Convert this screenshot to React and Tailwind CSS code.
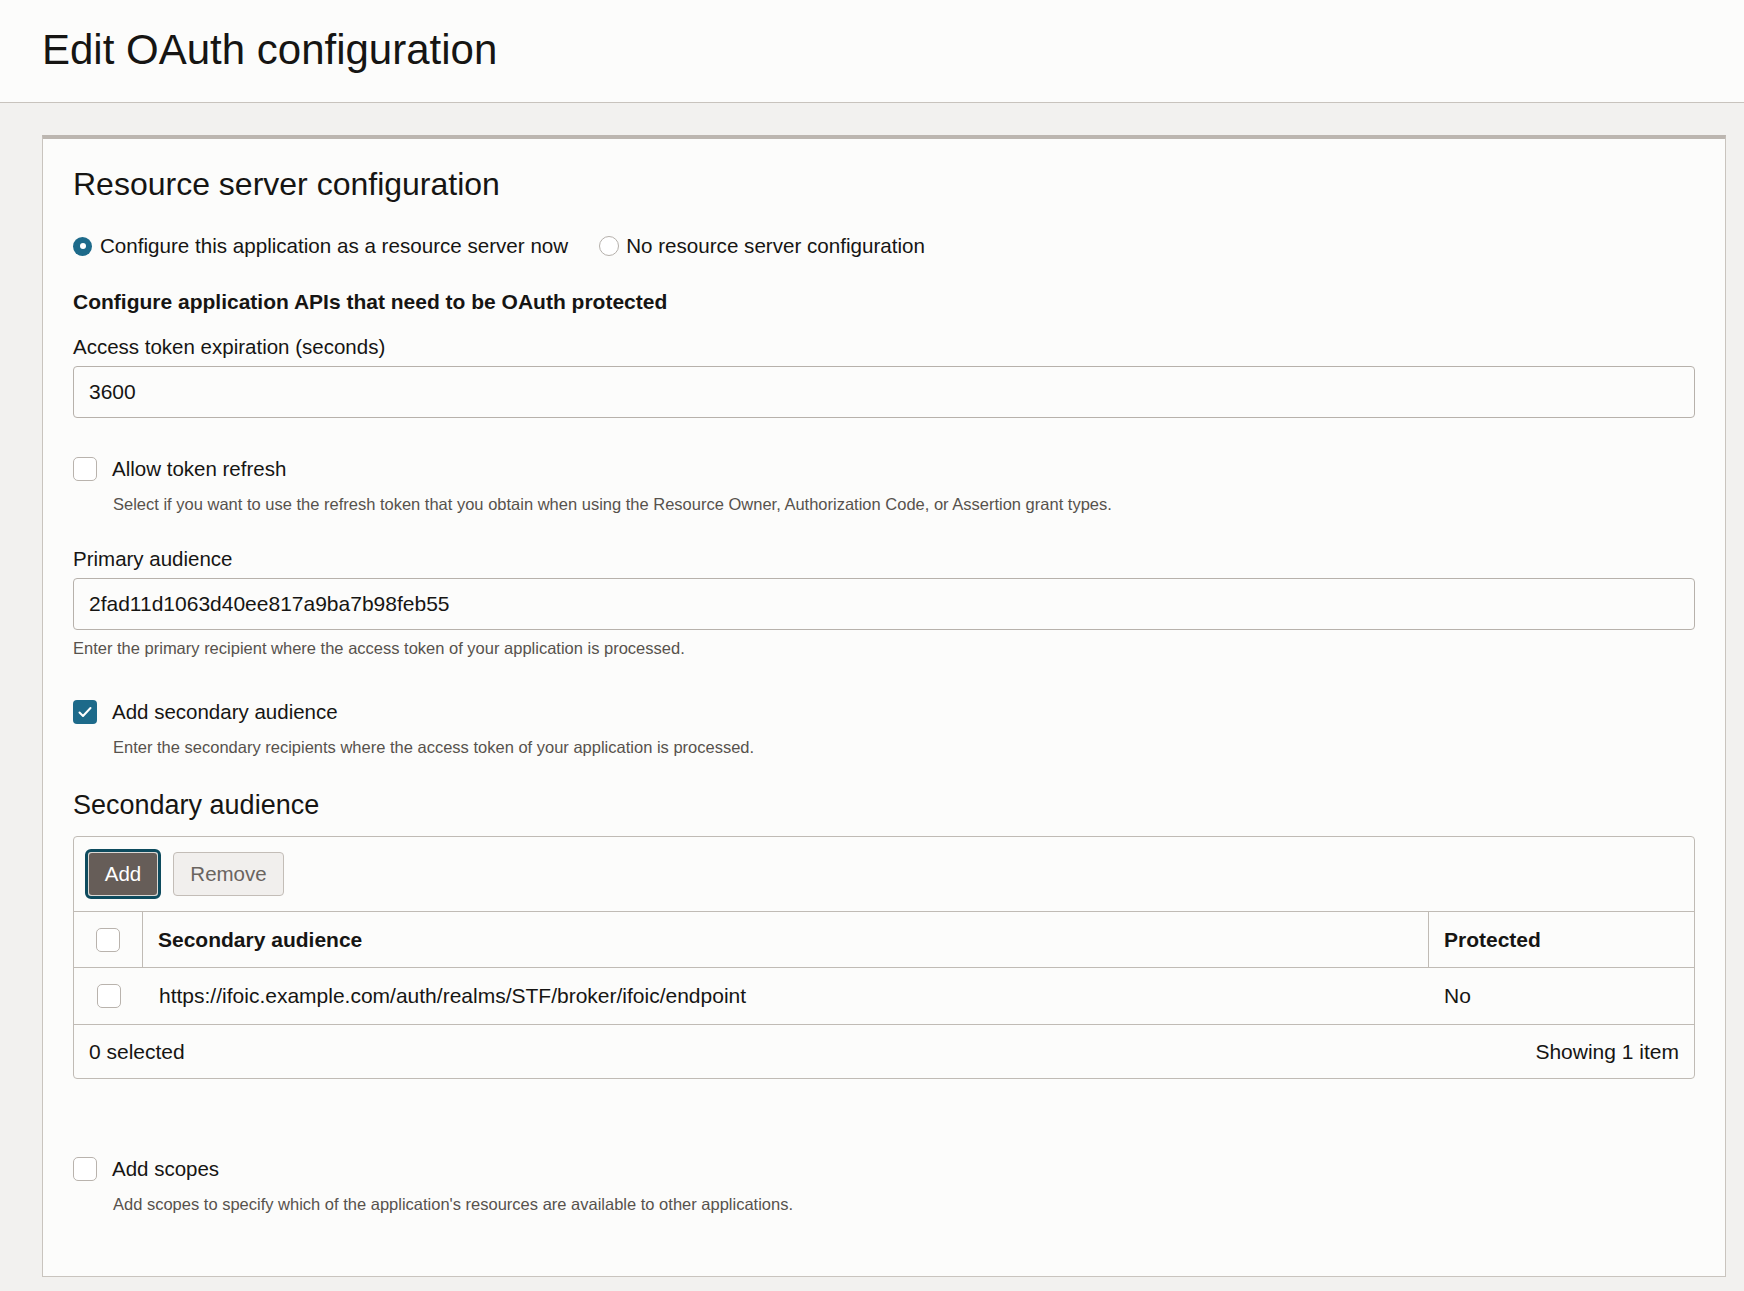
const font = { fontFamily: '"Liberation Sans", Arial, sans-serif' };

function Checkbox({ checked }) {
  if (checked) {
    return (
      <span className="flex h-[24px] w-[24px] shrink-0 items-center justify-center rounded-[4px] bg-[#1d6a8a]">
        <svg width="16" height="16" viewBox="0 0 16 16" fill="none">
          <path d="M2.5 8.5l3.5 3.5 7.5-8" stroke="#fff" strokeWidth="2" strokeLinecap="round" strokeLinejoin="round" />
        </svg>
      </span>
    );
  }
  return <span className="block h-[24px] w-[24px] shrink-0 rounded-[5px] border border-[#b9b3ad] bg-white" />;
}

function Radio({ checked }) {
  if (checked) {
    return (
      <span className="flex h-[19px] w-[19px] shrink-0 items-center justify-center rounded-full bg-[#1d6a8a]">
        <span className="block h-[6px] w-[6px] rounded-full bg-white" />
      </span>
    );
  }
  return <span className="block h-[20px] w-[20px] shrink-0 rounded-full border border-[#b5b0ab] bg-white" />;
}

function CheckField({ checked, label, help, className = '' }) {
  return (
    <div className={className}>
      <div className="flex h-[28px] items-center">
        <Checkbox checked={checked} />
        <span className="ml-[15px] text-[20.5px] leading-[28px] text-[#161513]">{label}</span>
      </div>
      <p className="ml-[40px] mt-[9px] text-[16.5px] leading-[24px] text-[#57524d]">{help}</p>
    </div>
  );
}

function TextField({ label, value, className = '' }) {
  return (
    <div className={className}>
      <div className="h-[28px] text-[20.5px] leading-[28px] text-[#161513]">{label}</div>
      <div className="mt-[5px] flex h-[52px] items-center rounded-[4px] border border-[#b7b1ab] bg-[#fcfcfb] px-[15px] text-[21px] text-[#161513]">
        {value}
      </div>
    </div>
  );
}

export default function App() {
  return (
    <div style={font} className="min-h-[1291px] bg-[#f2f1ef] text-[#161513]">
      {/* page header */}
      <div className="flex h-[103px] items-center border-b border-[#c8c3bd] bg-[#fcfcfb] pb-[3px] pl-[42px]">
        <h1 className="text-[42px] font-normal leading-[48px]">Edit OAuth configuration</h1>
      </div>

      <div className="pt-[32px] pb-[16px] pl-[42px] pr-[18px]">
        <div className="border-x border-b border-t-4 border-[#c9c4be] border-t-[#bcb6b0] bg-[#fcfcfb] px-[30px] pt-[25px] pb-[60px]">
          <h2 className="h-[40px] text-[32px] font-normal leading-[40px]">Resource server configuration</h2>

          <div className="mt-[28px] flex h-[28px] items-center text-[20.6px]">
            <Radio checked />
            <span className="ml-[8px]">Configure this application as a resource server now</span>
            <span className="ml-[31px]"><Radio /></span>
            <span className="ml-[7px]">No resource server configuration</span>
          </div>

          <div className="mt-[28px] h-[28px] text-[21px] font-bold leading-[28px]">
            Configure application APIs that need to be OAuth protected
          </div>

          <TextField className="mt-[17px]" label="Access token expiration (seconds)" value="3600" />

          <CheckField
            className="mt-[37px]"
            label="Allow token refresh"
            help="Select if you want to use the refresh token that you obtain when using the Resource Owner, Authorization Code, or Assertion grant types."
          />

          <TextField className="mt-[29px]" label="Primary audience" value="2fad11d1063d40ee817a9ba7b98feb55" />
          <p className="mt-[6px] text-[16.5px] leading-[24px] text-[#57524d]">
            Enter the primary recipient where the access token of your application is processed.
          </p>

          <CheckField
            checked
            className="mt-[38px]"
            label="Add secondary audience"
            help="Enter the secondary recipients where the access token of your application is processed."
          />

          <h3 className="mt-[28px] h-[36px] text-[27px] font-normal leading-[36px]">Secondary audience</h3>

          {/* table */}
          <div className="mt-[13px] rounded-[4px] border border-[#c0bbb5] text-[21px]">
            <div className="flex h-[75px] items-center gap-[12px] border-b border-[#c0bbb5] pl-[11px] text-[20.5px]">
              <div className="rounded-[6px] border-[3px] border-[#0e4b5e] bg-[#dcd8d4] p-[1px]">
                <button className="flex h-[42px] w-[68px] items-center justify-center rounded-[3px] bg-[#665d58] text-white">
                  Add
                </button>
              </div>
              <button className="flex h-[44px] w-[111px] items-center justify-center rounded-[4px] border border-[#c3bdb7] bg-[#f1efed] text-[#6a645f]">
                Remove
              </button>
            </div>

            <div className="flex h-[56px] border-b border-[#c0bbb5] font-bold">
              <div className="flex w-[69px] items-center justify-center border-r border-[#c0bbb5]">
                <Checkbox />
              </div>
              <div className="flex flex-1 items-center pl-[15px]">Secondary audience</div>
              <div className="flex w-[266px] items-center border-l border-[#c0bbb5] pl-[15px]">Protected</div>
            </div>

            <div className="flex h-[57px] border-b border-[#c0bbb5]">
              <div className="flex w-[70px] items-center justify-center">
                <Checkbox />
              </div>
              <div className="flex flex-1 items-center pl-[15px]">
                https://ifoic.example.com/auth/realms/STF/broker/ifoic/endpoint
              </div>
              <div className="flex w-[266px] items-center pl-[16px]">No</div>
            </div>

            <div className="flex h-[53px] items-center justify-between px-[15px]">
              <span>0 selected</span>
              <span>Showing 1 item</span>
            </div>
          </div>

          <CheckField
            className="mt-[76px]"
            label="Add scopes"
            help="Add scopes to specify which of the application's resources are available to other applications."
          />
        </div>
      </div>
    </div>
  );
}
